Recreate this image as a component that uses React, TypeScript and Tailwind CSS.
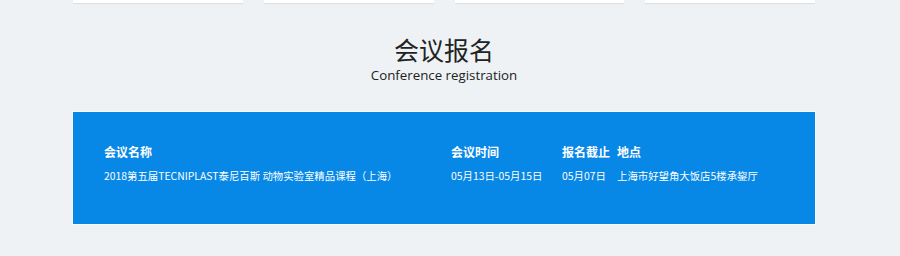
import React from 'react';

const font = { fontFamily: '"Noto Sans CJK SC", "Noto Sans", sans-serif' };

const rows = [
  {
    name: '2018第五届TECNIPLAST泰尼百斯 动物实验室精品课程（上海）',
    time: '05月13日-05月15日',
    deadline: '05月07日',
    place: '上海市好望角大饭店5楼承鋆厅',
  },
];

const cols = 'grid grid-cols-[347px_111px_55px_1fr]';

export default function App() {
  return (
    <div className="h-[256px] w-[900px] overflow-hidden bg-[#eef2f5]" style={font}>
      <div className="ml-[72px] w-[744px]">
        {/* bottoms of the cards above */}
        <div className="grid grid-cols-4 gap-[21px] px-[1px]">
          {[0, 1, 2, 3].map((i) => (
            <div key={i} className="h-[3px] bg-white shadow-[0_1px_1px_rgba(0,0,0,0.08)]" />
          ))}
        </div>

        <div className="mt-[32px] flex flex-col items-center text-[#222]">
          <h2 className="text-[25px] leading-[28px]">会议报名</h2>
          <p className="mt-[4px] text-[13.3px] leading-[16px]" style={{ fontFamily: '"Open Sans", "Noto Sans", sans-serif' }}>
            Conference registration
          </p>
        </div>

        <div className="mt-[28px] h-[114px] border border-[#f6fbff] bg-[#0787e6] pl-[31px] pt-[33px] text-white">
          <div className={`${cols} text-[12px] font-bold leading-[14px]`}>
            <span>会议名称</span>
            <span>会议时间</span>
            <span>报名截止</span>
            <span>地点</span>
          </div>
          {rows.map((r) => (
            <div key={r.name} className={`${cols} mt-[10px] text-[10.4px] leading-[14px]`}>
              <span>{r.name}</span>
              <span>{r.time}</span>
              <span>{r.deadline}</span>
              <span>{r.place}</span>
            </div>
          ))}
        </div>
      </div>
    </div>
  );
}
